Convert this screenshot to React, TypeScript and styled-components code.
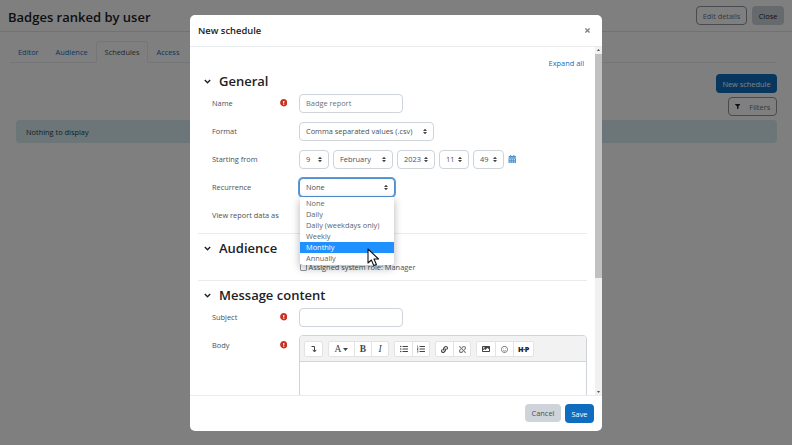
import React from "react";
import styled, { createGlobalStyle } from "styled-components";
import {
  FaCalendarAlt, FaExclamationCircle, FaFilter, FaImage, FaLink, FaListOl, FaListUl, FaRegSmile, FaUnlink, FaTimes,
} from "react-icons/fa";

const Global = createGlobalStyle`
  html, body { margin: 0; padding: 0; width: 792px; height: 445px; overflow: hidden; background: #fff; }
  body, input { font-family: "Open Sans", "Noto Sans", "Liberation Sans", sans-serif; color: #1d2125; }
  * { box-sizing: border-box; }
`;

const Page = styled.div`position: relative; width: 792px; height: 445px; overflow: hidden; background: #fff; font-size: 7.4px;`;
const TopBar = styled.header`
  height: 32px; padding: 6px 8px 0; display: flex; justify-content: space-between; align-items: flex-start;
  border-bottom: 1px solid #e4e4e4;
`;
const Title = styled.h1`margin: 0; padding-top: 1px; font-size: 13px; line-height: 20px; font-weight: 600; color: #1d2125;`;
const TopActions = styled.div`display: flex; gap: 5px;`;
const OutlineBtn = styled.div<{ $w: number; $gap?: number }>`
  width: ${(p) => p.$w}px; height: 19px; border: 1px solid #8f959e; border-radius: 4px; color: #6a737b;
  display: flex; align-items: center; justify-content: center; gap: ${(p) => p.$gap ?? 0}px; font-size: 7.4px;
`;
const GreyBtn = styled.div`
  width: 32px; height: 19px; border-radius: 4px; background: #ced4da; display: flex; align-items: center; justify-content: center; font-size: 7.4px; color: #1d2125;
`;
const Tabs = styled.nav`
  margin: 9px 16px 0 9.5px; height: 22px; display: flex; border-bottom: 1px solid #e9ecef; align-items: stretch;
`;
const Tab = styled.div<{ $active?: boolean }>`
  padding: 0 7.5px; margin-bottom: -1px; display: flex; align-items: center; font-size: 7.4px; color: ${(p) => (p.$active ? "#495057" : "#0f6cbf")};
  border: 1px solid ${(p) => (p.$active ? "#e9ecef" : "transparent")}; border-bottom-color: ${(p) => (p.$active ? "#fff" : "transparent")};
  border-radius: 3px 3px 0 0; background: ${(p) => (p.$active ? "#fff" : "transparent")};
`;
const Actions = styled.div`margin: 11px 15px 0 16px; display: flex; flex-direction: column; align-items: flex-end; gap: 4px;`;
const PrimaryBtn = styled.div<{ $w: number }>`
  width: ${(p) => p.$w}px; height: 19px; border-radius: 4px; background: #0f6cbf; color: #fff; font-size: 7.4px;
  display: flex; align-items: center; justify-content: center;
`;
const Alert = styled.div`
  margin: 4px 15px 0 16px; height: 23px; border-radius: 4px; background: #d8ecf1; color: #1d3f48; font-size: 7.4px;
  display: flex; align-items: center; padding-left: 10px;
`;

const Backdrop = styled.div`
  position: absolute; inset: 0; background: rgba(0,0,0,.5); display: flex; justify-content: center; padding-top: 15px;
`;
const Modal = styled.section`
  width: 412px; height: 416px; background: #fff; border-radius: 5px; display: flex; flex-direction: column; overflow: hidden;
`;
const ModalHead = styled.div`
  flex: 0 0 32px; display: flex; align-items: center; justify-content: space-between; padding: 0 11px 0 8px; border-bottom: 1px solid #e9ecef;
`;
const ModalTitle = styled.h5`margin: 0; font-size: 9.4px; font-weight: 600; color: #1d2125;`;
const CloseX = styled.span`color: #7b8288; display: flex; font-size: 7px;`;
const ModalMiddle = styled.div`flex: 1; min-height: 0; display: flex;`;
const Scroller = styled.div`flex: 1; min-width: 0; overflow: hidden; padding: 0 8px 0 8px;`;
const ScrollTrack = styled.div`
  flex: 0 0 7px; background: #f1f1f1; display: flex; flex-direction: column; align-items: center; justify-content: space-between;
`;
const ScrollThumb = styled.div`width: 7px; height: 224px; margin-top: 1px; background: #c1c1c1; margin-bottom: auto;`;
const ScrollArrow = styled.svg`width: 7px; height: 6px; flex: none;`;
const ExpandRow = styled.div`height: 25px; padding: 10px 3px 0 0; display: flex; justify-content: flex-end; font-size: 7.4px; color: #0f6cbf; line-height: 12px;`;
const SectionHead = styled.div<{ $h?: number; $pt?: number }>`
  height: ${(p) => p.$h ?? 17}px; padding-top: ${(p) => p.$pt ?? 0}px; display: flex; align-items: center; gap: 8px; padding-left: 6px;
`;
const Chevron = styled.svg`width: 7px; height: 5px; flex: none;`;
const SectionTitle = styled.h3`margin: 0; font-size: 13px; line-height: 17px; font-weight: 600; color: #1d2125;`;
const Row = styled.div<{ $top?: boolean }>`
  height: 28px; display: flex; align-items: ${(p) => (p.$top ? "flex-start" : "center")};
`;
const Label = styled.div<{ $top?: boolean }>`
  flex: 0 0 101px; padding-left: 14px; display: flex; justify-content: space-between; align-items: center; padding-right: 12px;
  font-size: 7.4px; color: #495057; ${(p) => (p.$top ? "padding-top: 9px;" : "")}
`;
const Req = styled.span`display: flex; color: #ca3120; font-size: 7.5px;`;
const TextInput = styled.input`
  width: 104px; height: 19px; border: 1px solid #ced4da; border-radius: 4px; padding: 0 6px; font-size: 7.4px; color: #6a737b; outline: none; background: #fff;
`;
const SelectBox = styled.div<{ $w: number; $focus?: boolean }>`
  position: relative; width: ${(p) => p.$w}px; height: 19px; flex: none; border: 1px solid ${(p) => (p.$focus ? "#4f8fd0" : "#ced4da")}; border-radius: 4px;
  ${(p) => p.$focus && "box-shadow: 0 0 0 1px #5c9bd8;"}
  padding: 0 6px; font-size: 7.4px; color: #495057; display: flex; justify-content: space-between; align-items: center; background: #fff; white-space: nowrap;
`;
const Caret = styled.svg`width: 4px; height: 7px; flex: none;`;
const DateRow = styled.div`display: flex; gap: 4px; align-items: center;`;
const CalIcon = styled.span`color: #0f6cbf; display: flex; font-size: 8.5px; opacity: .75;`;
const Menu = styled.div`
  position: absolute; left: 0; top: 18px; width: 94px; height: 68px; background: #fff; border-radius: 0 0 3px 3px; z-index: 2;
  box-shadow: 0 3px 9px rgba(0,0,0,.3); font-size: 7.4px; color: #5d656c; padding-top: 1px;
`;
const MenuItem = styled.div<{ $on?: boolean }>`
  height: 11.2px; line-height: 11.2px; padding-left: 6px; ${(p) => p.$on && "background: #1e90ff; color: #fff;"}
`;
const Cursor = styled.svg`position: absolute; left: 67px; top: 69px; width: 13px; height: 19px; z-index: 3;`;
const Divider = styled.hr<{ $mt: number }>`border: 0; border-top: 1px solid #e9ecef; margin: ${(p) => p.$mt}px 0 0;`;
const CheckRow = styled.label`display: flex; align-items: center; gap: 1.5px; height: 10px; margin: 1px 0 0 101px; font-size: 7.4px; color: #495057;`;
const Check = styled.input`width: 7px; height: 7px; margin: 0 0 0 1px; appearance: none; border: 1px solid #8f959e; border-radius: 1px; background: #fff;`;
const SubjectRow = styled(Row)`margin-top: -6px;`;
const Editor = styled.div`flex: 1; height: 110px; margin-top: 4px; border: 1px solid #ced4da; border-radius: 4px 4px 0 0; overflow: hidden; background: #fff;`;
const Toolbar = styled.div`height: 26px; background: #f2f2f2; border-bottom: 1px solid #ced4da; display: flex; align-items: flex-start; gap: 5px; padding: 5px 0 0 4px;`;
const ToolGroup = styled.div`display: flex; height: 16px; background: #fff; border: 1px solid #e3e3e3; border-radius: 2px;`;
const ToolBtn = styled.div<{ $w?: number }>`
  width: ${(p) => p.$w ?? 18}px; display: flex; align-items: center; justify-content: center; gap: 2px; color: #444;
  & + & { border-left: 1px solid #e3e3e3; }
`;
const SerifGlyph = styled.span<{ $bold?: boolean; $italic?: boolean }>`
  font-family: "Liberation Serif", serif; font-size: 9.5px; color: #444;
  font-weight: ${(p) => (p.$bold ? 700 : 400)}; font-style: ${(p) => (p.$italic ? "italic" : "normal")};
`;
const HP = styled.span`font-size: 7.2px; font-weight: 800; color: #222; letter-spacing: -.3px;`;
const TinyCaret = styled.svg`width: 5px; height: 3px;`;
const ModalFoot = styled.div`flex: 0 0 36px; border-top: 1px solid #e9ecef; display: flex; justify-content: flex-end; align-items: flex-start; gap: 4px; padding: 8px 8px 0 0;`;
const Cancel = styled.div`width: 36px; height: 18px; border-radius: 4px; background: #ced4da; color: #495057; font-size: 7.4px; display: flex; align-items: center; justify-content: center;`;

const SelCaret = () => (
  <Caret viewBox="0 0 4 7"><path d="M0 3L2 .8 4 3zM0 4L2 6.2 4 4z" fill="#444" /></Caret>
);
const Chev = () => (
  <Chevron viewBox="0 0 7 5"><path d="M.8 1L3.5 3.7 6.2 1" fill="none" stroke="#1d2125" strokeWidth="1.4" /></Chevron>
);
const Select = ({ w, children }: { w: number; children: React.ReactNode }) => (
  <SelectBox $w={w}><span>{children}</span><SelCaret /></SelectBox>
);
const Required = () => <Req><FaExclamationCircle /></Req>;
const options = ["None", "Daily", "Daily (weekdays only)", "Weekly", "Monthly", "Annually"];

export default function App() {
  return (
    <Page>
      <Global />
      <TopBar>
        <Title>Badges ranked by user</Title>
        <TopActions>
          <OutlineBtn $w={51}>Edit details</OutlineBtn>
          <GreyBtn>Close</GreyBtn>
        </TopActions>
      </TopBar>
      <Tabs>
        <Tab>Editor</Tab><Tab>Audience</Tab><Tab $active>Schedules</Tab><Tab>Access</Tab>
      </Tabs>
      <Actions>
        <PrimaryBtn $w={61}>New schedule</PrimaryBtn>
        <OutlineBtn $w={49} $gap={9}><FaFilter size={5.5} color="#1d2125" />Filters</OutlineBtn>
      </Actions>
      <Alert>Nothing to display</Alert>

      <Backdrop>
        <Modal>
          <ModalHead>
            <ModalTitle>New schedule</ModalTitle>
            <CloseX><FaTimes /></CloseX>
          </ModalHead>
          <ModalMiddle>
            <Scroller>
              <ExpandRow>Expand all</ExpandRow>
              <SectionHead $pt={2}><Chev /><SectionTitle>General</SectionTitle></SectionHead>
              <Row><Label>Name<Required /></Label><TextInput readOnly value="Badge report" /></Row>
              <Row><Label>Format</Label><Select w={135}>Comma separated values (.csv)</Select></Row>
              <Row>
                <Label>Starting from</Label>
                <DateRow>
                  <Select w={30}>9</Select><Select w={60}>February</Select><Select w={38}>2023</Select>
                  <Select w={30}>11</Select><Select w={31}>49</Select>
                  <CalIcon><FaCalendarAlt /></CalIcon>
                </DateRow>
              </Row>
              <Row>
                <Label>Recurrence</Label>
                <SelectBox $w={96} $focus>
                  <span>None</span><SelCaret />
                  <Menu>
                    {options.map((o) => <MenuItem key={o} $on={o === "Monthly"}>{o}</MenuItem>)}
                  </Menu>
                  <Cursor viewBox="0 0 13 19">
                    <path d="M1 1v14l3.4-3 2.4 5.6 2.6-1.1-2.4-5.5H11.5z" fill="#fff" stroke="#111" strokeWidth="1.1" strokeLinejoin="round" />
                  </Cursor>
                </SelectBox>
              </Row>
              <Row><Label>View report data as</Label></Row>
              <Divider $mt={4} />
              <SectionHead $h={27} $pt={2}><Chev /><SectionTitle>Audience</SectionTitle></SectionHead>
              <CheckRow><Check type="checkbox" readOnly />Assigned system role: Manager</CheckRow>
              <Divider $mt={8} />
              <SectionHead $h={28}><Chev /><SectionTitle>Message content</SectionTitle></SectionHead>
              <SubjectRow><Label>Subject<Required /></Label><TextInput readOnly /></SubjectRow>
              <Row $top>
                <Label $top>Body<Required /></Label>
                <Editor>
                  <Toolbar>
                    <ToolGroup>
                      <ToolBtn $w={17}><svg width="6" height="8" viewBox="0 0 6 8"><path d="M.5 1.5H3.5V6M1.8 4.8L3.5 7 5.2 4.8" fill="none" stroke="#444" strokeWidth="1" /></svg></ToolBtn>
                    </ToolGroup>
                    <ToolGroup>
                      <ToolBtn $w={25}><SerifGlyph>A</SerifGlyph><TinyCaret viewBox="0 0 5 3"><path d="M0 0H5L2.5 3z" fill="#444" /></TinyCaret></ToolBtn>
                      <ToolBtn $w={17}><SerifGlyph $bold>B</SerifGlyph></ToolBtn>
                      <ToolBtn $w={17}><SerifGlyph $italic>I</SerifGlyph></ToolBtn>
                    </ToolGroup>
                    <ToolGroup>
                      <ToolBtn $w={17}><FaListUl size={8} /></ToolBtn>
                      <ToolBtn $w={17}><FaListOl size={8} /></ToolBtn>
                    </ToolGroup>
                    <ToolGroup>
                      <ToolBtn $w={17}><FaLink size={7} /></ToolBtn>
                      <ToolBtn $w={17}><FaUnlink size={7} color="#777" /></ToolBtn>
                    </ToolGroup>
                    <ToolGroup>
                      <ToolBtn $w={18}><FaImage size={8} /></ToolBtn>
                      <ToolBtn $w={18}><FaRegSmile size={7} color="#666" /></ToolBtn>
                      <ToolBtn $w={20}><HP>H·P</HP></ToolBtn>
                    </ToolGroup>
                  </Toolbar>
                </Editor>
              </Row>
            </Scroller>
            <ScrollTrack>
              <ScrollArrow viewBox="0 0 7 6"><path d="M3.5 2L5 4H2z" fill="#505050" /></ScrollArrow>
              <ScrollThumb />
              <ScrollArrow viewBox="0 0 7 6"><path d="M3.5 4L5 2H2z" fill="#505050" /></ScrollArrow>
            </ScrollTrack>
          </ModalMiddle>
          <ModalFoot>
            <Cancel>Cancel</Cancel>
            <PrimaryBtn $w={29}>Save</PrimaryBtn>
          </ModalFoot>
        </Modal>
      </Backdrop>
    </Page>
  );
}
